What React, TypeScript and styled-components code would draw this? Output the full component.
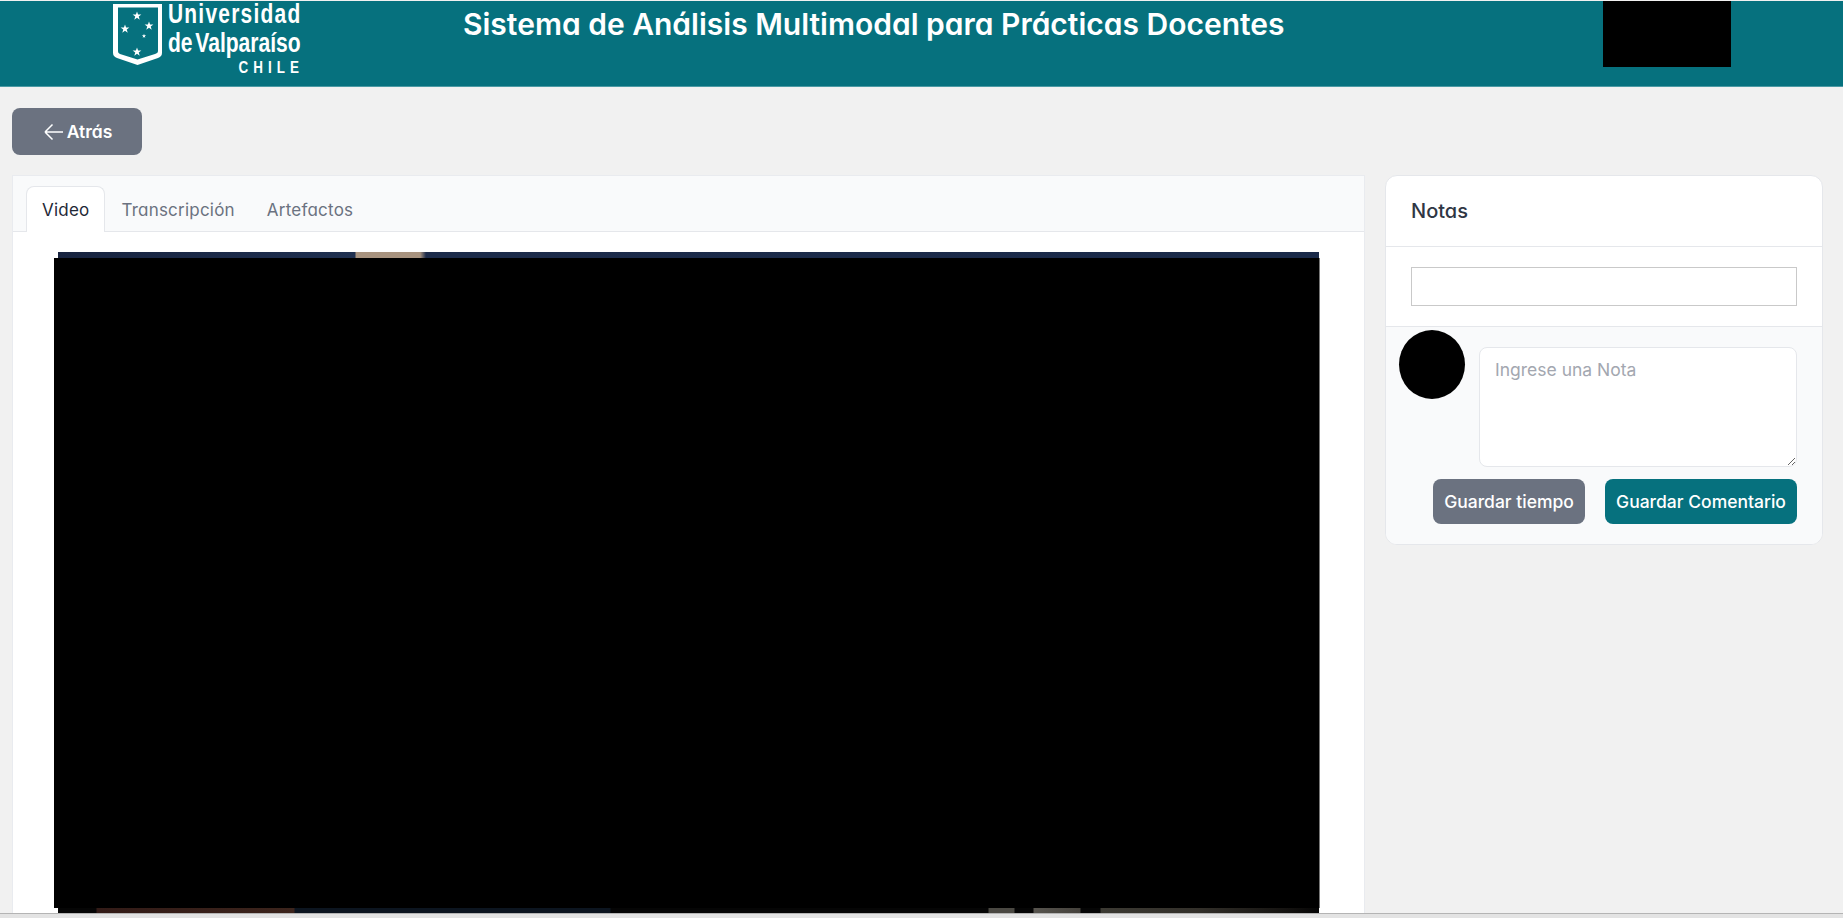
// Vista de análisis de video con panel de notas
import styled, { createGlobalStyle } from 'styled-components';

const GlobalStyle = createGlobalStyle`
  html, body {
    margin: 0;
    height: 100%;
    overflow: hidden;
    background-color: #f1f1f1;
    font-family: Inter, "Noto Sans", sans-serif;
  }
  * {
    box-sizing: border-box;
  }
`;

const tabs = ['Video', 'Transcripción', 'Artefactos'];

const stars = [
  { x: 24, y: 12, r: 4.6 },
  { x: 12, y: 25, r: 4.6 },
  { x: 36, y: 22, r: 4.6 },
  { x: 31, y: 32, r: 2.2 },
  { x: 24, y: 48, r: 4.6 },
];

// puntos de una estrella de 5 puntas
const starPoints = (cx: number, cy: number, r: number) =>
  Array.from({ length: 10 }, (_, i) => {
    const radius = i % 2 === 0 ? r : r * 0.4;
    const angle = (Math.PI / 5) * i - Math.PI / 2;
    return `${cx + radius * Math.cos(angle)},${cy + radius * Math.sin(angle)}`;
  }).join(' ');

const App = () => {
  return (
    <Page>
      <GlobalStyle />
      <Header>
        <Logo>
          <svg width="49" height="61" viewBox="0 0 49 61">
            <path
              fillRule="evenodd"
              fill="#fff"
              d="M0 0H49V49C49 52 47 53 45 54L24.5 61L4 54C2 53 0 52 0 49ZM5 3.5V47C5 49 6 49.5 7 50L24.5 55.5L42 50C43.5 49.5 45 49 45 47V3.5Z"
            />
            {stars.map((star) => (
              <polygon
                key={`${star.x}-${star.y}`}
                fill="#fff"
                points={starPoints(star.x, star.y, star.r)}
              />
            ))}
          </svg>
          <LogoText>
            <LogoLine>Universidad</LogoLine>
            <LogoLine $tight>de Valparaíso</LogoLine>
            <LogoCountry>CHILE</LogoCountry>
          </LogoText>
        </Logo>
        <Title>Sistema de Análisis Multimodal para Prácticas Docentes</Title>
        <HeaderRedaction />
      </Header>
      <Content>
        <BackButton type="button">
          <svg
            width="24"
            height="24"
            viewBox="0 0 24 24"
            fill="none"
            stroke="currentColor"
            strokeWidth="1.5"
          >
            <path d="M10.5 19.5L3 12m0 0l7.5-7.5M3 12h18" />
          </svg>
          Atrás
        </BackButton>
        <Columns>
          <MainCard>
            <TabBar>
              {tabs.map((tab, index) => (
                <Tab key={tab} $active={index === 0}>
                  {tab}
                </Tab>
              ))}
            </TabBar>
            <VideoFrame>
              <VideoTop />
              <VideoRedaction />
              <VideoBottom />
            </VideoFrame>
          </MainCard>
          <NotesCard>
            <NotesTitle>Notas</NotesTitle>
            <SearchRow>
              <SearchInput type="text" />
            </SearchRow>
            <NotesFooter>
              <NoteRow>
                <Avatar />
                <NoteInput placeholder="Ingrese una Nota" />
              </NoteRow>
              <NoteActions>
                <ActionButton type="button" $tone="#6b7280" $width={152}>
                  Guardar tiempo
                </ActionButton>
                <ActionButton type="button" $tone="#06717e" $width={192}>
                  Guardar Comentario
                </ActionButton>
              </NoteActions>
            </NotesFooter>
          </NotesCard>
        </Columns>
      </Content>
      <BottomBar />
    </Page>
  );
};

export default App;

const Page = styled.div`
  display: flex;
  flex-direction: column;
  height: 918px;
  padding-top: 1px;
  overflow: hidden;
  background-color: #f1f1f1;
`;

const Header = styled.header`
  display: flex;
  flex: none;
  align-items: flex-start;
  height: 86px;
  padding: 0 112px 0 113px;
  color: #fff;
  background-color: #06717e;
  border-bottom: 1px solid #4b9aa4;
`;

const Logo = styled.div`
  display: flex;
  gap: 6px;
  padding-top: 3px;
`;

const LogoText = styled.div`
  display: flex;
  flex-direction: column;
  width: 132px;
  margin-top: -4px;
`;

const LogoLine = styled.span<{ $tight?: boolean }>`
  height: 29px;
  font-family: 'Liberation Sans', sans-serif;
  font-size: 27px;
  font-weight: 700;
  line-height: 29px;
  letter-spacing: ${({ $tight }) => ($tight ? '0' : '1.6px')};
  word-spacing: ${({ $tight }) => ($tight ? '-4px' : '0')};
  white-space: nowrap;
  transform: scaleX(${({ $tight }) => ($tight ? 0.78 : 0.775)});
  transform-origin: left center;
`;

const LogoCountry = styled.span`
  align-self: flex-end;
  margin-top: 2px;
  margin-right: -4px;
  font-family: 'Liberation Sans', sans-serif;
  font-size: 16px;
  font-weight: 700;
  line-height: 16px;
  letter-spacing: 6px;
  transform: scaleX(0.84);
  transform-origin: right center;
`;

const Title = styled.h1`
  margin: 5px 0 0 163px;
  font-size: 30px;
  font-weight: 600;
  line-height: 36px;
  font-feature-settings: 'cv11';
  white-space: nowrap;
`;

const HeaderRedaction = styled.div`
  width: 128px;
  height: 66px;
  margin-left: auto;
  background-color: #000;
`;

const Content = styled.main`
  display: flex;
  flex: 1;
  flex-direction: column;
  min-height: 0;
  padding: 21px 20px 0 12px;
  overflow: hidden;
`;

const BackButton = styled.button`
  display: flex;
  flex: none;
  align-items: center;
  justify-content: center;
  gap: 1px;
  width: 130px;
  height: 47px;
  padding: 0;
  color: #fff;
  font-family: inherit;
  font-size: 17.5px;
  font-weight: 600;
  font-feature-settings: 'cv11';
  background-color: #6b7280;
  border: none;
  border-radius: 8px;
`;

const Columns = styled.div`
  display: flex;
  flex: 1;
  align-items: flex-start;
  gap: 20px;
  margin-top: 20px;
  min-height: 0;
`;

const MainCard = styled.section`
  flex: none;
  width: 1353px;
  height: 738px;
  background-color: #fff;
  border: 1px solid #e9ebef;
  border-bottom: none;
`;

const TabBar = styled.nav`
  display: flex;
  align-items: flex-end;
  height: 56px;
  padding-left: 13px;
  background-color: #f9fafb;
  border-bottom: 1px solid #e5e7eb;
`;

const Tab = styled.div<{ $active?: boolean }>`
  height: 46px;
  margin-bottom: -1px;
  padding: 0 15px;
  color: ${({ $active }) => ($active ? '#1f2937' : '#6b7280')};
  font-size: 17px;
  line-height: 46px;
  letter-spacing: 0.22px;
  font-feature-settings: 'cv11';
  background-color: ${({ $active }) => ($active ? '#fff' : 'transparent')};
  border: 1px solid ${({ $active }) => ($active ? '#e5e7eb' : 'transparent')};
  border-bottom: none;
  border-radius: 8px 8px 0 0;
`;

const VideoFrame = styled.div`
  display: flex;
  flex-direction: column;
  width: 1261px;
  margin: 20px 0 0 45px;
`;

const VideoTop = styled.div`
  height: 6px;
  background: linear-gradient(
    90deg,
    #17233f 0,
    #1f3050 297px,
    #a8937f 298px,
    #a8937f 362px,
    #1c2b4a 368px,
    #1a2a49 100%
  );
`;

const VideoRedaction = styled.div`
  flex: none;
  height: 650px;
  margin: 0 -1px 0 -4px;
  background-color: #000;
  border-right: 1px solid #777;
`;

const VideoBottom = styled.div`
  height: 5px;
  background: linear-gradient(
    90deg,
    #050505 0,
    #050505 38px,
    #331b17 39px,
    #3c241c 236px,
    #0c1520 237px,
    #0c1520 552px,
    #050505 553px,
    #050505 930px,
    #4a4842 931px,
    #4a4842 956px,
    #050505 957px,
    #050505 975px,
    #57544e 976px,
    #45423c 1022px,
    #050505 1023px,
    #050505 1042px,
    #3c3a33 1043px,
    #33302a 1140px,
    #141210 1230px,
    #050505 100%
  );
`;

const NotesCard = styled.aside`
  flex: none;
  width: 438px;
  height: 370px;
  overflow: hidden;
  background-color: #fff;
  border: 1px solid #e5e7eb;
  border-radius: 12px;
`;

const NotesTitle = styled.h2`
  height: 71px;
  margin: 0;
  padding: 21px 25px;
  color: #2f3644;
  font-size: 20px;
  font-weight: 500;
  line-height: 28px;
  font-feature-settings: 'cv11';
  border-bottom: 1px solid #e5e7eb;
`;

const SearchRow = styled.div`
  padding: 20px 25px;
  border-bottom: 1px solid #e5e7eb;
`;

const SearchInput = styled.input`
  display: block;
  width: 100%;
  height: 39px;
  background-color: #fff;
  border: 1px solid #c9c9c9;
  border-radius: 0;
  outline: none;
`;

const NotesFooter = styled.div`
  height: 100%;
  padding: 3px 25px 20px 13px;
  background-color: #f9fafb;
`;

const NoteRow = styled.div`
  display: flex;
  align-items: flex-start;
  gap: 14px;
`;

const Avatar = styled.div`
  flex: none;
  width: 66px;
  height: 69px;
  background-color: #000;
  border-radius: 50%;
`;

const NoteInput = styled.textarea`
  flex: 1;
  height: 120px;
  margin-top: 17px;
  padding: 10px 15px;
  color: #1f2937;
  font-family: inherit;
  font-size: 17.5px;
  line-height: 24px;
  background-color: #fff;
  border: 1px solid #e5e7eb;
  border-radius: 8px;
  outline: none;
  resize: vertical;

  &::placeholder {
    color: #a3a7b0;
  }
`;

const NoteActions = styled.div`
  display: flex;
  justify-content: flex-end;
  gap: 20px;
  margin-top: 12px;
`;

const ActionButton = styled.button<{ $tone: string; $width: number }>`
  width: ${({ $width }) => $width}px;
  height: 45px;
  padding: 0;
  color: #fff;
  font-family: inherit;
  font-size: 17.5px;
  font-weight: 500;
  background-color: ${({ $tone }) => $tone};
  border: none;
  border-radius: 8px;
`;

const BottomBar = styled.div`
  flex: none;
  height: 5px;
  background-color: #e3e3e3;
  border-top: 1px solid #b4b4b4;
`;
